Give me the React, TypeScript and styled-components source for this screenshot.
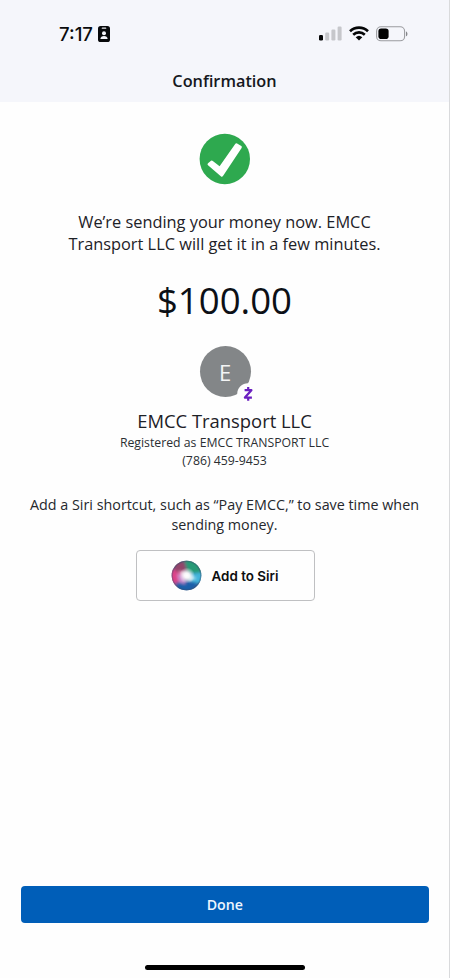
import React from "react";
import styled, { createGlobalStyle } from "styled-components";

const GlobalStyle = createGlobalStyle`
  * { box-sizing: border-box; }
  body { margin: 0; background: #fefefe; }
`;

const Screen = styled.div`
  display: flex;
  flex-direction: column;
  width: 450px;
  height: 978px;
  overflow: hidden;
  background: #fefefe;
  border-right: 1px solid #d9dadc;
  font-family: "Open Sans", "Noto Sans", sans-serif;
  color: #1d2127;
`;

const Header = styled.header`
  height: 102px;
  flex: none;
  background: #f5f6fb;
`;

const StatusBar = styled.div`
  display: flex;
  align-items: center;
  justify-content: space-between;
  height: 67px;
  padding: 0 41px 0 59px;
`;

const StatusGroup = styled.div<{ $gap: number }>`
  display: flex;
  align-items: center;
  gap: ${(p) => p.$gap}px;
`;

const Clock = styled.span`
  font: 500 18.6px/24px Inter, sans-serif;
  color: #0a0b0d;
`;

const Title = styled.h1`
  margin: 2px 0 0;
  font-size: 16.3px;
  font-weight: 600;
  line-height: 24px;
  text-align: center;
  color: #15181d;
`;

const Content = styled.main`
  display: flex;
  flex: 1;
  flex-direction: column;
  align-items: center;
  padding: 31px 0 0;
`;

const CheckBadge = styled.svg`
  display: block;
  width: 52px;
  height: 52px;
  margin-left: 1px;
`;

const Message = styled.p`
  width: 340px;
  margin: 26px 0 0;
  font-size: 16.35px;
  line-height: 22px;
  text-align: center;
`;

const Amount = styled.div`
  margin-top: 20px;
  font-size: 36.6px;
  line-height: 51px;
  color: #0c1016;
`;

const Avatar = styled.div`
  position: relative;
  display: flex;
  align-items: center;
  justify-content: center;
  width: 51px;
  height: 51px;
  margin: 20px 0 0 1px;
  border-radius: 50%;
  background: #838688;
  color: #f4f5f5;
  font-size: 22px;
  line-height: 30px;
`;

const ZelleBadge = styled.svg`
  position: absolute;
  left: 37px;
  top: 37px;
  width: 22px;
  height: 22px;
`;

const PayeeName = styled.h2`
  margin: 12px 0 1px;
  font-size: 18.4px;
  font-weight: 400;
  line-height: 24px;
`;

const PayeeDetail = styled.div`
  font-size: 12.28px;
  line-height: 18px;
  color: #2b2e33;
`;

const SiriHint = styled.p`
  width: 400px;
  margin: 25px 0 0;
  font-size: 14.34px;
  line-height: 19.5px;
  text-align: center;
  color: #25282d;
`;

const SiriButton = styled.button`
  display: flex;
  align-items: center;
  gap: 10px;
  width: 179px;
  height: 51px;
  margin: 16px 0 0 1px;
  padding: 0 0 0 34px;
  border: 1px solid #bfc0c2;
  border-radius: 4px;
  background: #fefefe;
  color: #0d0e10;
  font: 600 13.4px/20px Inter, sans-serif;
`;

const Footer = styled.footer`
  display: flex;
  flex: none;
  flex-direction: column;
  align-items: center;
  gap: 42px;
  height: 92px;
  padding: 0 20px 0 20.5px;
`;

const DoneButton = styled.button`
  width: 100%;
  height: 36.5px;
  padding: 2px 0 0;
  border: 0;
  border-radius: 4px;
  background: #005eb8;
  color: #eef6ff;
  font: 600 14.2px/20px "Open Sans", sans-serif;
`;

const HomeIndicator = styled.div`
  width: 160px;
  height: 5px;
  border-radius: 3px;
  background: #000;
`;

const IdCardIcon = () => (
  <svg width="12" height="16" viewBox="0 0 12 16">
    <rect width="12" height="16" rx="2.6" fill="#08090b" />
    <rect x="3.7" y="1.5" width="4.6" height="1.3" rx="0.65" fill="#e8e9ee" />
    <circle cx="6" cy="7.3" r="2" fill="#f5f6fb" />
    <path d="M2.4 13c0-2 1.5-3 3.6-3s3.6 1 3.6 3z" fill="#f5f6fb" />
  </svg>
);

const SignalIcon = () => (
  <svg width="23" height="15" viewBox="0 0 23 15">
    <rect x="0" y="9" width="4" height="5.5" rx="1.2" fill="#050607" />
    <rect x="6.2" y="6.5" width="4" height="8" rx="1.2" fill="#c6c7cb" />
    <rect x="12.4" y="3.5" width="4" height="11" rx="1.2" fill="#c6c7cb" />
    <rect x="18.6" y="0.5" width="4" height="14" rx="1.2" fill="#c6c7cb" />
  </svg>
);

const WifiIcon = () => (
  <svg width="20" height="15" viewBox="0 0 20 15">
    <g fill="none" stroke="#050607" strokeWidth="2.6">
      <path d="M1 5.2a13 13 0 0 1 18 0" />
      <path d="M4.2 8.7a8.4 8.4 0 0 1 11.6 0" />
    </g>
    <path d="M6.7 11.3a4.8 4.8 0 0 1 6.6 0L10 14.6z" fill="#050607" />
  </svg>
);

const BatteryIcon = () => (
  <svg width="32" height="16" viewBox="0 0 32 16">
    <rect x="0.6" y="0.8" width="28" height="14" rx="4.4" fill="none" stroke="#9b9ca0" strokeWidth="1.1" />
    <rect x="2.4" y="2.6" width="10.2" height="10.4" rx="2.8" fill="#020203" />
    <path d="M30 5.4c1.9.6 1.9 4.2 0 4.8z" fill="#85868a" />
  </svg>
);

const SiriOrb = () => (
  <svg width="31" height="31" viewBox="0 0 31 31">
    <defs>
      <clipPath id="orb"><circle cx="15.5" cy="15.5" r="14.8" /></clipPath>
      <filter id="soft" x="-50%" y="-50%" width="200%" height="200%"><feGaussianBlur stdDeviation="1.8" /></filter>
      <radialGradient id="glow" cx="16" cy="15.5" r="8" gradientUnits="userSpaceOnUse">
        <stop offset="0" stopColor="#fff" />
        <stop offset="0.3" stopColor="#fff" stopOpacity="0.9" />
        <stop offset="1" stopColor="#fff" stopOpacity="0" />
      </radialGradient>
    </defs>
    <g clipPath="url(#orb)">
      <rect width="31" height="31" fill="#4a6788" />
      <g filter="url(#soft)">
        <path d="M-1 7L15 14L8 28L-2 23z" fill="#dc4389" />
        <path d="M2 3L13 1L16 12L5 12z" fill="#93446a" />
        <path d="M13 -2L28 2L31 13L17 13z" fill="#279a76" />
        <path d="M18 14L33 12L30 24L20 22z" fill="#3fb2da" />
        <path d="M4 23L17 20L28 24L19 33L7 32z" fill="#1f5fa9" />
        <path d="M6 14L15 15L14 24L8 22z" fill="#cc8fd0" />
      </g>
      <circle cx="16" cy="15.5" r="8" fill="url(#glow)" />
      <path d="M14 13L26 18L18 22z" fill="#fff" fillOpacity="0.6" filter="url(#soft)" />
      <path d="M7 11L16 12L14 18z" fill="#fff" fillOpacity="0.6" filter="url(#soft)" />
    </g>
    <circle cx="15.5" cy="15.5" r="14.2" fill="none" stroke="#384b67" strokeOpacity="0.35" strokeWidth="1.2" />
  </svg>
);

export default function App() {
  return (
    <>
      <GlobalStyle />
      <Screen>
        <Header>
          <StatusBar>
            <StatusGroup $gap={5}>
              <Clock>7:17</Clock>
              <IdCardIcon />
            </StatusGroup>
            <StatusGroup $gap={7}>
              <SignalIcon />
              <WifiIcon />
              <BatteryIcon />
            </StatusGroup>
          </StatusBar>
          <Title>Confirmation</Title>
        </Header>
        <Content>
          <CheckBadge viewBox="0 0 52 52">
            <circle cx="25.8" cy="26" r="25.2" fill="#2ea94f" />
            <path
              d="M9 30.2L12 27.8Q12.9 27.2 13.8 27.9L20.6 33.2L36.2 10.9Q37 9.8 38.1 10.5L42.3 13.1Q43.3 13.8 42.6 14.9L24 43Q23 44.3 21.8 43.2L9 32.3Q7.9 31.2 9 30.2z"
              fill="#fff"
            />
          </CheckBadge>
          <Message>We’re sending your money now. EMCC Transport LLC will get it in a few minutes.</Message>
          <Amount>$100.00</Amount>
          <Avatar>
            E
            <ZelleBadge viewBox="0 0 22 22">
              <circle cx="11" cy="11" r="10.8" fill="#fefefe" />
              <path
                d="M7.6 7.2H14.4L7.9 14.6H14.9M11.2 4V7.2M11.2 14.6V17.8"
                fill="none"
                stroke="#6a1fc0"
                strokeWidth="2.2"
                strokeLinejoin="round"
              />
            </ZelleBadge>
          </Avatar>
          <PayeeName>EMCC Transport LLC</PayeeName>
          <PayeeDetail>Registered as EMCC TRANSPORT LLC</PayeeDetail>
          <PayeeDetail>(786) 459-9453</PayeeDetail>
          <SiriHint>Add a Siri shortcut, such as “Pay EMCC,” to save time when sending money.</SiriHint>
          <SiriButton>
            <SiriOrb />
            Add to Siri
          </SiriButton>
        </Content>
        <Footer>
          <DoneButton>Done</DoneButton>
          <HomeIndicator />
        </Footer>
      </Screen>
    </>
  );
}
